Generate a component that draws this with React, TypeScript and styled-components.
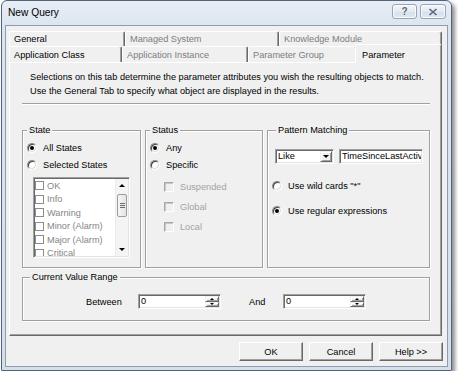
import React from 'react'
import styled, { createGlobalStyle } from 'styled-components'

const states = ['OK', 'Info', 'Warning', 'Minor (Alarm)', 'Major (Alarm)', 'Critical']
const flags = ['Suspended', 'Global', 'Local']

const App = () => {
    return (
        <>
            <GlobalStyle />
            <Window>
                <TitleBar>
                    <Title>New Query</Title>
                    <Caption>
                        <CaptionButton $w={25}>?</CaptionButton>
                        <CaptionButton $w={26}>
                            <svg width="10" height="8" viewBox="0 0 10 8">
                                <path d="M1.5 1 L8.5 7 M8.5 1 L1.5 7" stroke="#56677e" strokeWidth="1.6" fill="none" />
                            </svg>
                        </CaptionButton>
                    </Caption>
                </TitleBar>

                <Client>
                    <TabRow $h={15}>
                        <Tab $w={116}>General</Tab>
                        <Tab $w={154} $dim>Managed System</Tab>
                        <Tab $w={163} $dim>Knowledge Module</Tab>
                    </TabRow>
                    <TabRow $h={16}>
                        <Tab $w={113}>Application Class</Tab>
                        <Tab $w={126} $dim>Application Instance</Tab>
                        <Tab $w={109} $dim>Parameter Group</Tab>
                        <Tab $w={85} $active>Parameter</Tab>
                    </TabRow>

                    <Panel>
                        <Intro>
                            Selections on this tab determine the parameter attributes you wish the resulting objects to match.
                            <br />
                            Use the General Tab to specify what object are displayed in the results.
                        </Intro>
                        <Rule />

                        <GroupRow>
                            <Group>
                                <Legend>State</Legend>
                                <Option><RadioMark $checked />All States</Option>
                                <Option $gap={3}><RadioMark />Selected States</Option>
                                <ListBox>
                                    <ListItems>
                                        {states.map((s) => (
                                            <ListItem key={s}><ListCheck />{s}</ListItem>
                                        ))}
                                    </ListItems>
                                    <ScrollBar>
                                        <ScrollButton><Arrow $dir="up" /></ScrollButton>
                                        <ScrollTrack>
                                            <Thumb />
                                        </ScrollTrack>
                                        <ScrollButton><Arrow $dir="down" /></ScrollButton>
                                    </ScrollBar>
                                </ListBox>
                            </Group>

                            <Group>
                                <Legend>Status</Legend>
                                <Option><RadioMark $checked />Any</Option>
                                <Option $gap={3}><RadioMark />Specific</Option>
                                {flags.map((f, i) => (
                                    <Option key={f} $gap={i === 0 ? 8 : 6} $indent={14} $disabled>
                                        <CheckMark />{f}
                                    </Option>
                                ))}
                            </Group>

                            <Group>
                                <Legend $inset={4}>Pattern Matching</Legend>
                                <FieldRow>
                                    <Combo>
                                        <FieldText>Like</FieldText>
                                        <ComboButton><Arrow $dir="down" /></ComboButton>
                                    </Combo>
                                    <TextField>
                                        <FieldText>TimeSinceLastActivity</FieldText>
                                    </TextField>
                                </FieldRow>
                                <Option $gap={15}><RadioMark />Use wild cards "*"</Option>
                                <Option $gap={11}><RadioMark $checked />Use regular expressions</Option>
                            </Group>
                        </GroupRow>

                        <RangeGroup>
                            <Legend $inset={3}>Current Value Range</Legend>
                            <RangeRow>
                                <RangeLabel $w={52}>Between</RangeLabel>
                                <Spin>
                                    <FieldText>0</FieldText>
                                    <SpinButtons>
                                        <SpinButton><Arrow $dir="up" $small /></SpinButton>
                                        <SpinButton><Arrow $dir="down" $small /></SpinButton>
                                    </SpinButtons>
                                </Spin>
                                <RangeLabel $w={34} $ml={28}>And</RangeLabel>
                                <Spin>
                                    <FieldText>0</FieldText>
                                    <SpinButtons>
                                        <SpinButton><Arrow $dir="up" $small /></SpinButton>
                                        <SpinButton><Arrow $dir="down" $small /></SpinButton>
                                    </SpinButtons>
                                </Spin>
                            </RangeRow>
                        </RangeGroup>
                    </Panel>

                    <Footer>
                        <DialogButton>OK</DialogButton>
                        <DialogButton>Cancel</DialogButton>
                        <DialogButton>Help &gt;&gt;</DialogButton>
                    </Footer>
                </Client>
            </Window>
        </>
    )
}

export default App



const GlobalStyle = createGlobalStyle`
html, body {
    margin: 0;
    padding: 0;
    background: #ffffff;
}
body {
    font-family: "Liberation Sans", Arial, sans-serif;
    font-size: 9.2px;
    color: #000;
}
* {
    box-sizing: border-box;
}
`

const Window = styled.div`
margin-left: 1px;
width: 451px;
height: 371px;
border: 1px solid #53647a;
border-radius: 6px 6px 1px 1px;
padding: 0 3px 3px;
background: linear-gradient(#e8eef6, #dce5ef 24px, #d5dfea);
box-shadow: 3px 3px 4px rgba(0, 0, 0, 0.45);
display: flex;
flex-direction: column;
`

const TitleBar = styled.div`
height: 24px;
flex: none;
display: flex;
justify-content: space-between;
align-items: flex-start;
padding: 0 2px 0 3px;
`

const Title = styled.div`
font-size: 10.2px;
line-height: 24px;
color: #000;
`

const Caption = styled.div`
display: flex;
gap: 3px;
margin-top: 3px;
`

const CaptionButton = styled.div<{ $w: number }>`
width: ${(p) => p.$w}px;
height: 15px;
border: 1px solid #95a4b8;
border-radius: 3px;
background: linear-gradient(#f3f6fa, #e4eaf2 50%, #d8e1eb 51%, #e0e7f0);
box-shadow: inset 0 0 0 1px rgba(255, 255, 255, 0.75);
display: flex;
align-items: center;
justify-content: center;
color: #56677e;
font: bold 10px "Liberation Sans", Arial, sans-serif;
text-shadow: 0 0 1px #fff;
`

const Client = styled.div`
flex: 1;
background: #f0f0f0;
border: 1px solid #8d9cb0;
padding: 5px 5px 0 3px;
display: flex;
flex-direction: column;
`

const TabRow = styled.div<{ $h: number }>`
display: flex;
height: ${(p) => p.$h}px;
flex: none;
`

const Tab = styled.div<{ $w: number; $dim?: boolean; $active?: boolean }>`
width: ${(p) => p.$w}px;
flex: none;
padding-left: 4px;
border: 1px solid #fff;
border-bottom: 0;
border-right-color: #696969;
border-radius: 2px 2px 0 0;
box-shadow: inset -1px 0 0 #a0a0a0;
background: #f0f0f0;
color: ${(p) => (p.$dim ? '#7d7d7d' : '#000')};
display: flex;
align-items: center;
white-space: nowrap;
overflow: hidden;

${(p) => p.$active && `
    position: relative;
    z-index: 1;
    width: ${p.$w + 2}px;
    margin: -2px 0 -1px -2px;
    padding: 2px 0 0 6px;
`}
`

const Panel = styled.div`
flex: none;
border: 1px solid #fff;
border-right-color: #696969;
border-bottom-color: #696969;
box-shadow: inset -1px -1px 0 #a0a0a0;
padding: 7px 11px 14px 12px;
`

const Intro = styled.div`
padding-left: 8px;
line-height: 14px;
white-space: nowrap;
`

const Rule = styled.div`
margin-top: 5px;
height: 2px;
border-top: 1px solid #a0a0a0;
border-bottom: 1px solid #fff;
`

const GroupRow = styled.div`
margin-top: 19px;
display: grid;
grid-template-columns: 119px 118px 1fr;
column-gap: 4px;
`

const Group = styled.fieldset`
margin: 0;
min-width: 0;
padding: 4px 4px 9px;
border: 1px solid #a0a0a0;
box-shadow: inset 1px 1px 0 #fff, 1px 1px 0 #fff;
display: flex;
flex-direction: column;
align-items: flex-start;
`

const RangeGroup = styled(Group)`
margin-top: 3px;
padding: 10px 4px 11px;
`

const Legend = styled.legend<{ $inset?: number }>`
padding: 0 2px;
margin-left: ${(p) => p.$inset ?? 0}px;
line-height: 13px;
background: #f0f0f0;
`

const Option = styled.label<{ $gap?: number; $indent?: number; $disabled?: boolean }>`
display: flex;
align-items: center;
gap: 6px;
height: 14px;
margin-top: ${(p) => p.$gap ?? 0}px;
margin-left: ${(p) => p.$indent ?? 0}px;
color: ${(p) => (p.$disabled ? '#a3a3a3' : '#000')};
white-space: nowrap;
`

const RadioMark = styled.span<{ $checked?: boolean }>`
width: 10px;
height: 10px;
flex: none;
border-radius: 50%;
border: 1px solid;
border-color: #8a8a8a #fff #fff #8a8a8a;
box-shadow: inset 1px 1px 0 #404040, inset -1px -1px 0 #dcdcdc;
background: #fff;
display: flex;
align-items: center;
justify-content: center;

&::after {
    content: "";
    display: ${(p) => (p.$checked ? 'block' : 'none')};
    width: 4px;
    height: 4px;
    border-radius: 50%;
    background: #000;
}
`

const CheckMark = styled.span`
width: 10px;
height: 10px;
flex: none;
border: 1px solid;
border-color: #a8a8a8 #fff #fff #a8a8a8;
box-shadow: inset 1px 1px 0 #c8c8c8;
background: #f0f0f0;
`

const ListBox = styled.div`
margin: 5px 0 0 6px;
width: 97px;
height: 81px;
padding: 1px;
border: 1px solid;
border-color: #a0a0a0 #fff #fff #a0a0a0;
box-shadow: inset 1px 1px 0 #696969, inset -1px -1px 0 #e3e3e3;
background: #fff;
display: flex;
overflow: hidden;
`

const ListItems = styled.div`
flex: 1;
overflow: hidden;
`

const ListItem = styled.div`
display: flex;
align-items: center;
gap: 3px;
height: 13.5px;
color: #858585;
white-space: nowrap;
`

const ListCheck = styled.span`
width: 9px;
height: 9px;
flex: none;
border: 1px solid #8c8c8c;
background: #fff;
`

const ScrollBar = styled.div`
width: 13px;
flex: none;
display: flex;
flex-direction: column;
background: #f4f4f4;
border-left: 1px solid #ececec;
`

const ScrollButton = styled.div`
height: 13px;
flex: none;
display: flex;
align-items: center;
justify-content: center;
`

const ScrollTrack = styled.div`
flex: 1;
padding: 2px 1px 0;
`

const Thumb = styled.div`
height: 23px;
border: 1px solid #9c9c9c;
border-radius: 2px;
background: linear-gradient(90deg, #f6f6f6, #e4e4e4);
display: flex;
align-items: center;
justify-content: center;

&::after {
    content: "";
    width: 5px;
    height: 5px;
    background: repeating-linear-gradient(#6a6a6a 0 1px, transparent 1px 2px);
}
`

const Arrow = styled.span<{ $dir: 'up' | 'down'; $small?: boolean }>`
width: 0;
height: 0;
border-left: ${(p) => (p.$small ? 2 : 3)}px solid transparent;
border-right: ${(p) => (p.$small ? 2 : 3)}px solid transparent;
${(p) => (p.$dir === 'up' ? 'border-bottom' : 'border-top')}: ${(p) => (p.$small ? 2 : 3)}px solid #000;
`

const FieldRow = styled.div`
display: flex;
gap: 5px;
margin: 8px 0 0 3px;
`

const Sunken = styled.div`
height: 15px;
border: 1px solid;
border-color: #a0a0a0 #fff #fff #a0a0a0;
box-shadow: inset 1px 1px 0 #696969, inset -1px -1px 0 #e3e3e3;
background: #fff;
display: flex;
align-items: stretch;
padding: 1px;
overflow: hidden;
`

const Combo = styled(Sunken)`
width: 59px;
`

const TextField = styled(Sunken)`
width: 84px;
`

const FieldText = styled.span`
flex: 1;
min-width: 0;
padding-left: 1px;
line-height: 11px;
white-space: nowrap;
overflow: hidden;
`

const Raised = styled.div`
display: flex;
align-items: center;
justify-content: center;
background: #f0f0f0;
border: 1px solid;
border-color: #f0f0f0 #696969 #696969 #f0f0f0;
box-shadow: inset 1px 1px 0 #fff, inset -1px -1px 0 #a0a0a0;
`

const ComboButton = styled(Raised)`
width: 12px;
flex: none;
`

const RangeRow = styled.div`
display: flex;
align-items: center;
padding-left: 59px;
`

const RangeLabel = styled.span<{ $w: number; $ml?: number }>`
width: ${(p) => p.$w}px;
margin-left: ${(p) => p.$ml ?? 0}px;
flex: none;
`

const Spin = styled(Sunken)`
width: 83px;
`

const SpinButtons = styled.div`
width: 14px;
flex: none;
display: flex;
flex-direction: column;
`

const SpinButton = styled(Raised)`
flex: 1;
`

const Footer = styled.div`
display: flex;
justify-content: flex-end;
gap: 6px;
margin-top: 6px;
margin-right: -1px;
`

const DialogButton = styled.button`
width: 64px;
height: 19px;
padding: 0;
font: inherit;
color: #000;
background: #f0f0f0;
border: 1px solid;
border-color: #fff #696969 #696969 #fff;
box-shadow: inset -1px -1px 0 #a0a0a0;
`
